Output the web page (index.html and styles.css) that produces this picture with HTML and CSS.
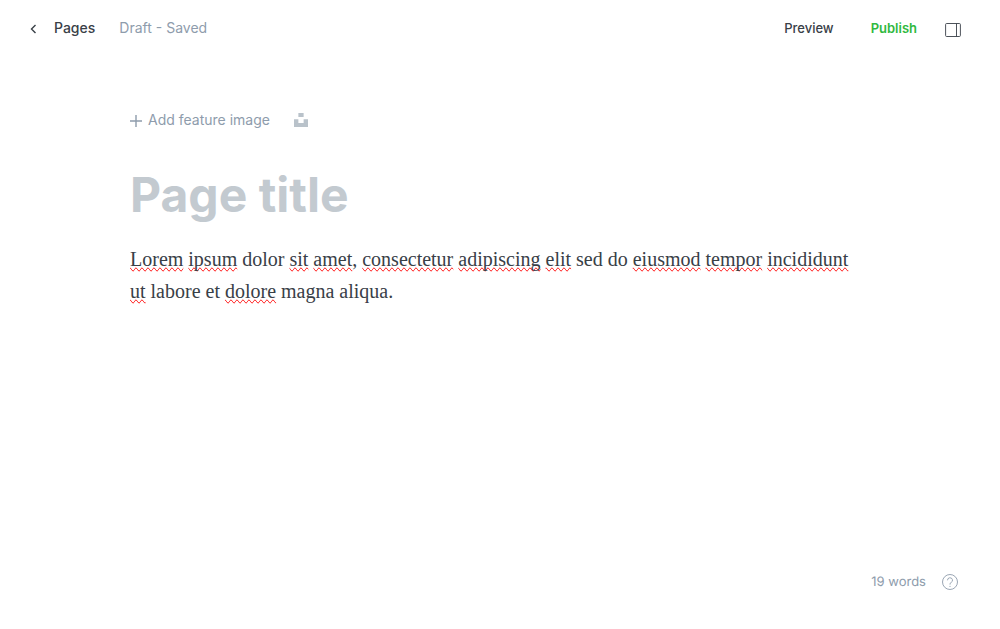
FILE: index.html
```html
<!DOCTYPE html>
<html lang="en">
<head>
<meta charset="utf-8">
<meta name="viewport" content="width=device-width, initial-scale=1">
<title>Page editor</title>
<link rel="stylesheet" href="styles.css">
</head>
<body class="editor">
<header class="editor-header">
  <nav class="breadcrumb">
    <a class="back-link" href="#pages">
      <svg class="back-icon" viewBox="0 0 8 10" aria-hidden="true"><path d="M6.500 1 2.500 5l4 4"/></svg>
      <span>Pages</span>
    </a>
    <span class="status">Draft - Saved</span>
  </nav>
  <div class="actions">
    <button class="action" type="button">Preview</button>
    <button class="action publish" type="button">Publish</button>
    <button class="sidebar-toggle" type="button" aria-label="Settings">
      <svg class="sidebar-icon" viewBox="0 0 16 14" aria-hidden="true"><rect x=".6" y=".5" width="14.800" height="13" rx="1"/><path d="M11.500 .5v13"/></svg>
    </button>
  </div>
</header>
<main class="canvas">
  <div class="feature-image">
    <button class="add-image" type="button">
      <svg class="plus-icon" viewBox="0 0 12 12" aria-hidden="true"><path d="M6 0v12M0 6h12"/></svg>
      <span>Add feature image</span>
    </button>
    <button class="unsplash" type="button" aria-label="Unsplash">
      <svg class="unsplash-icon" viewBox="0 0 32 32" aria-hidden="true"><path d="M10 9V0h12v9H10zm12 5h10v18H0V14h10v9h12v-9z"/></svg>
    </button>
  </div>
  <input class="title" type="text" placeholder="Page title" aria-label="Page title">
  <div class="body-text" contenteditable="true" spellcheck="false" role="textbox" aria-label="Page content"><p class="paragraph"><span class="misspelt">Lorem</span> <span class="misspelt">ipsum</span> dolor <span class="misspelt">sit</span> <span class="misspelt">amet</span>, <span class="misspelt">consectetur</span> <span class="misspelt">adipiscing</span> <span class="misspelt">elit</span> sed do <span class="misspelt">eiusmod</span> <span class="misspelt">tempor</span> <span class="misspelt">incididunt</span> <span class="misspelt">ut</span> labore et <span class="misspelt">dolore</span> magna aliqua.</p></div>
</main>
<footer class="editor-footer">
  <span class="word-count">19 words</span>
  <a class="help" href="#help" aria-label="Help">
    <svg class="help-icon" viewBox="0 0 16 16" aria-hidden="true"><circle cx="8" cy="8" r="7.500"/><path d="M5.500 6.300a2.500 2.500 0 1 1 3.600 2.200c-.8.400-1.100.8-1.100 1.500v.6"/><circle class="help-dot" cx="8" cy="12.300" r=".6"/></svg>
  </a>
</footer>
</body>
</html>
```

FILE: styles.css
```css
* { box-sizing: border-box; }

.editor {
  display: flex;
  flex-direction: column;
  min-height: 100vh;
  margin: 0;
  background: #fff;
  color: #394047;
  font-family: Inter, "Open Sans", sans-serif;
  font-size: 14px;
}

button {
  padding: 0;
  border: 0;
  background: none;
  color: inherit;
  font: inherit;
  cursor: pointer;
}

a { color: inherit; text-decoration: none; }

svg { display: block; fill: none; stroke: currentColor; }

.editor-header {
  display: flex;
  align-items: center;
  justify-content: space-between;
  height: 56px;
  padding: 0 39px 0 29px;
}

.breadcrumb, .back-link, .actions, .feature-image, .add-image {
  display: flex;
  align-items: center;
}

.breadcrumb { gap: 24px; line-height: 18px; }
.back-link { gap: 17px; font-weight: 500; }
.back-icon { width: 8px; height: 10px; margin-top: 2px; stroke-width: 1.4; }
.status { color: #8e9cac; }

.actions { font-size: 13px; font-weight: 500; text-rendering: geometricPrecision; }
.action + .action { margin-left: 37px; }
.publish { color: #30b940; font-weight: 600; }
.sidebar-toggle { margin-left: 28px; padding-top: 4px; }
.sidebar-icon { width: 16px; height: 14px; stroke-width: .9; }

.canvas {
  flex: 1;
  width: 100%;
  max-width: 820px;
  margin: 0 auto;
  padding: 52px 40px 0;
}

.feature-image { gap: 24px; height: 24px; color: #8e9cac; line-height: 18px; }
.add-image { gap: 6px; }
.plus-icon { width: 12px; height: 12px; margin-top: 2px; stroke-width: 1.4; }
.unsplash-icon { width: 14px; height: 14px; fill: #b9c2ca; stroke: none; }

.title {
  display: block;
  width: 100%;
  height: 60px;
  margin: 33px 0 18px;
  padding: 0;
  border: 0;
  outline: 0;
  background: none;
  color: #15171a;
  font: 700 48px/60px Inter, "Open Sans", sans-serif;
}

.title::placeholder { color: #c3cad0; opacity: 1; }

.body-text {
  max-width: 732px;
  outline: 0;
  font: 20px/32px "Liberation Serif", serif;
}

.paragraph { margin: 0; }
.misspelt { text-decoration-line: spelling-error; }

.editor-footer {
  display: flex;
  align-items: center;
  justify-content: flex-end;
  gap: 16px;
  padding: 0 42px 39px 0;
  color: #8e9cac;
  font-size: 13px;
  text-rendering: geometricPrecision;
}

.help-icon { width: 16px; height: 16px; stroke-width: .9; }
.help-dot { fill: currentColor; stroke: none; }
```
